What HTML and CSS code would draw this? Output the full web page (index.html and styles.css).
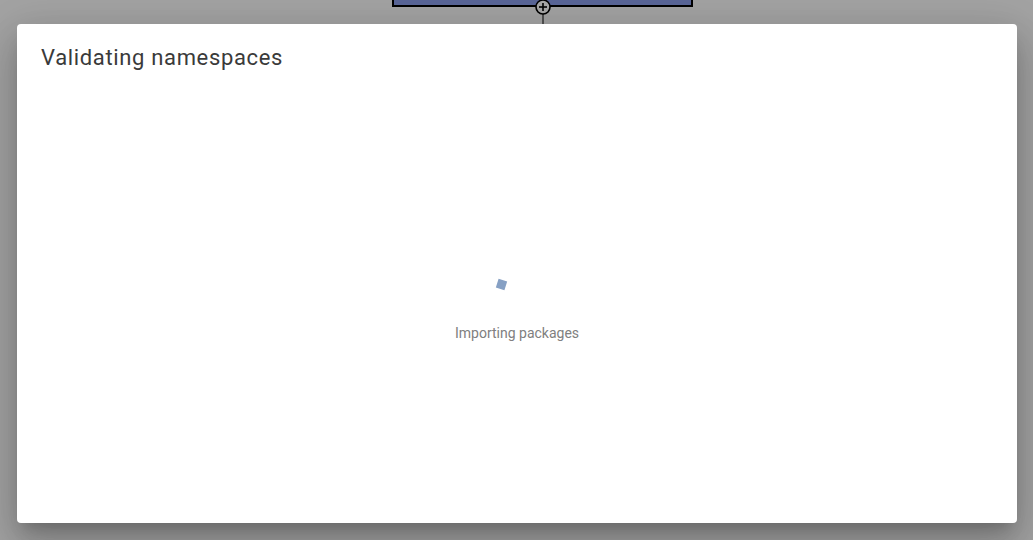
FILE: index.html
```html
<!DOCTYPE html>
<html>
<head>
<meta charset="utf-8">
<link rel="stylesheet" href="styles.css">
</head>
<body>
<div class="canvas">
  <div class="node"></div>
  <svg class="connector" width="20" height="26" viewBox="0 0 20 26">
    <line x1="10" y1="14" x2="10" y2="26" stroke="#000" stroke-width="1"/>
    <circle cx="10" cy="7" r="7" fill="#a8a8a8" stroke="#000" stroke-width="1.6"/>
    <line x1="6" y1="7" x2="14" y2="7" stroke="#000" stroke-width="1.6"/>
    <line x1="10" y1="3" x2="10" y2="11" stroke="#000" stroke-width="1.6"/>
  </svg>
</div>
<div class="backdrop">
  <div class="dialog">
    <h2 class="title">Validating namespaces</h2>
    <div class="body">
      <div class="loader">
        <div class="spinner"></div>
        <div class="status">Importing packages</div>
      </div>
    </div>
  </div>
</div>
</body>
</html>
```
FILE: styles.css
```css
html, body {
  margin: 0;
  padding: 0;
  width: 100%;
  height: 100%;
  overflow: hidden;
}
body {
  background: #a3a3a3;
  font-family: Roboto, "Noto Sans", sans-serif;
  position: relative;
}
.canvas {
  position: absolute;
  inset: 0;
}
.node {
  position: absolute;
  left: 392px;
  top: -20px;
  width: 297px;
  height: 23px;
  background: #5a6698;
  border: 2px solid #000;
}
.connector {
  position: absolute;
  left: 533px;
  top: 0;
}
.backdrop {
  position: relative;
  display: flex;
  padding: 24px 16px 17px 17px;
  height: 100%;
  box-sizing: border-box;
}
.dialog {
  width: 1000px;
  height: 499px;
  background: #fff;
  border-radius: 4px;
  box-shadow: 0 11px 15px -7px rgba(0,0,0,0.2), 0 24px 38px 3px rgba(0,0,0,0.14), 0 9px 46px 8px rgba(0,0,0,0.12);
  display: flex;
  flex-direction: column;
  padding: 0 24px;
  box-sizing: border-box;
}
.title {
  margin: 0;
  padding-top: 18px;
  font-size: 22px;
  font-weight: 400;
  line-height: 32px;
  letter-spacing: 0.65px;
  color: #3a3a3a;
}
.body {
  flex: 1;
  display: flex;
  align-items: flex-start;
  justify-content: center;
}
.loader {
  margin-top: 206px;
  display: flex;
  flex-direction: column;
  align-items: center;
}
.spinner {
  width: 9px;
  height: 9px;
  background: #86a0c4;
  transform: rotate(18deg);
  margin-left: -32px;
  margin-bottom: 34px;
}
.status {
  font-size: 14px;
  color: #808080;
  line-height: 20px;
}
```
